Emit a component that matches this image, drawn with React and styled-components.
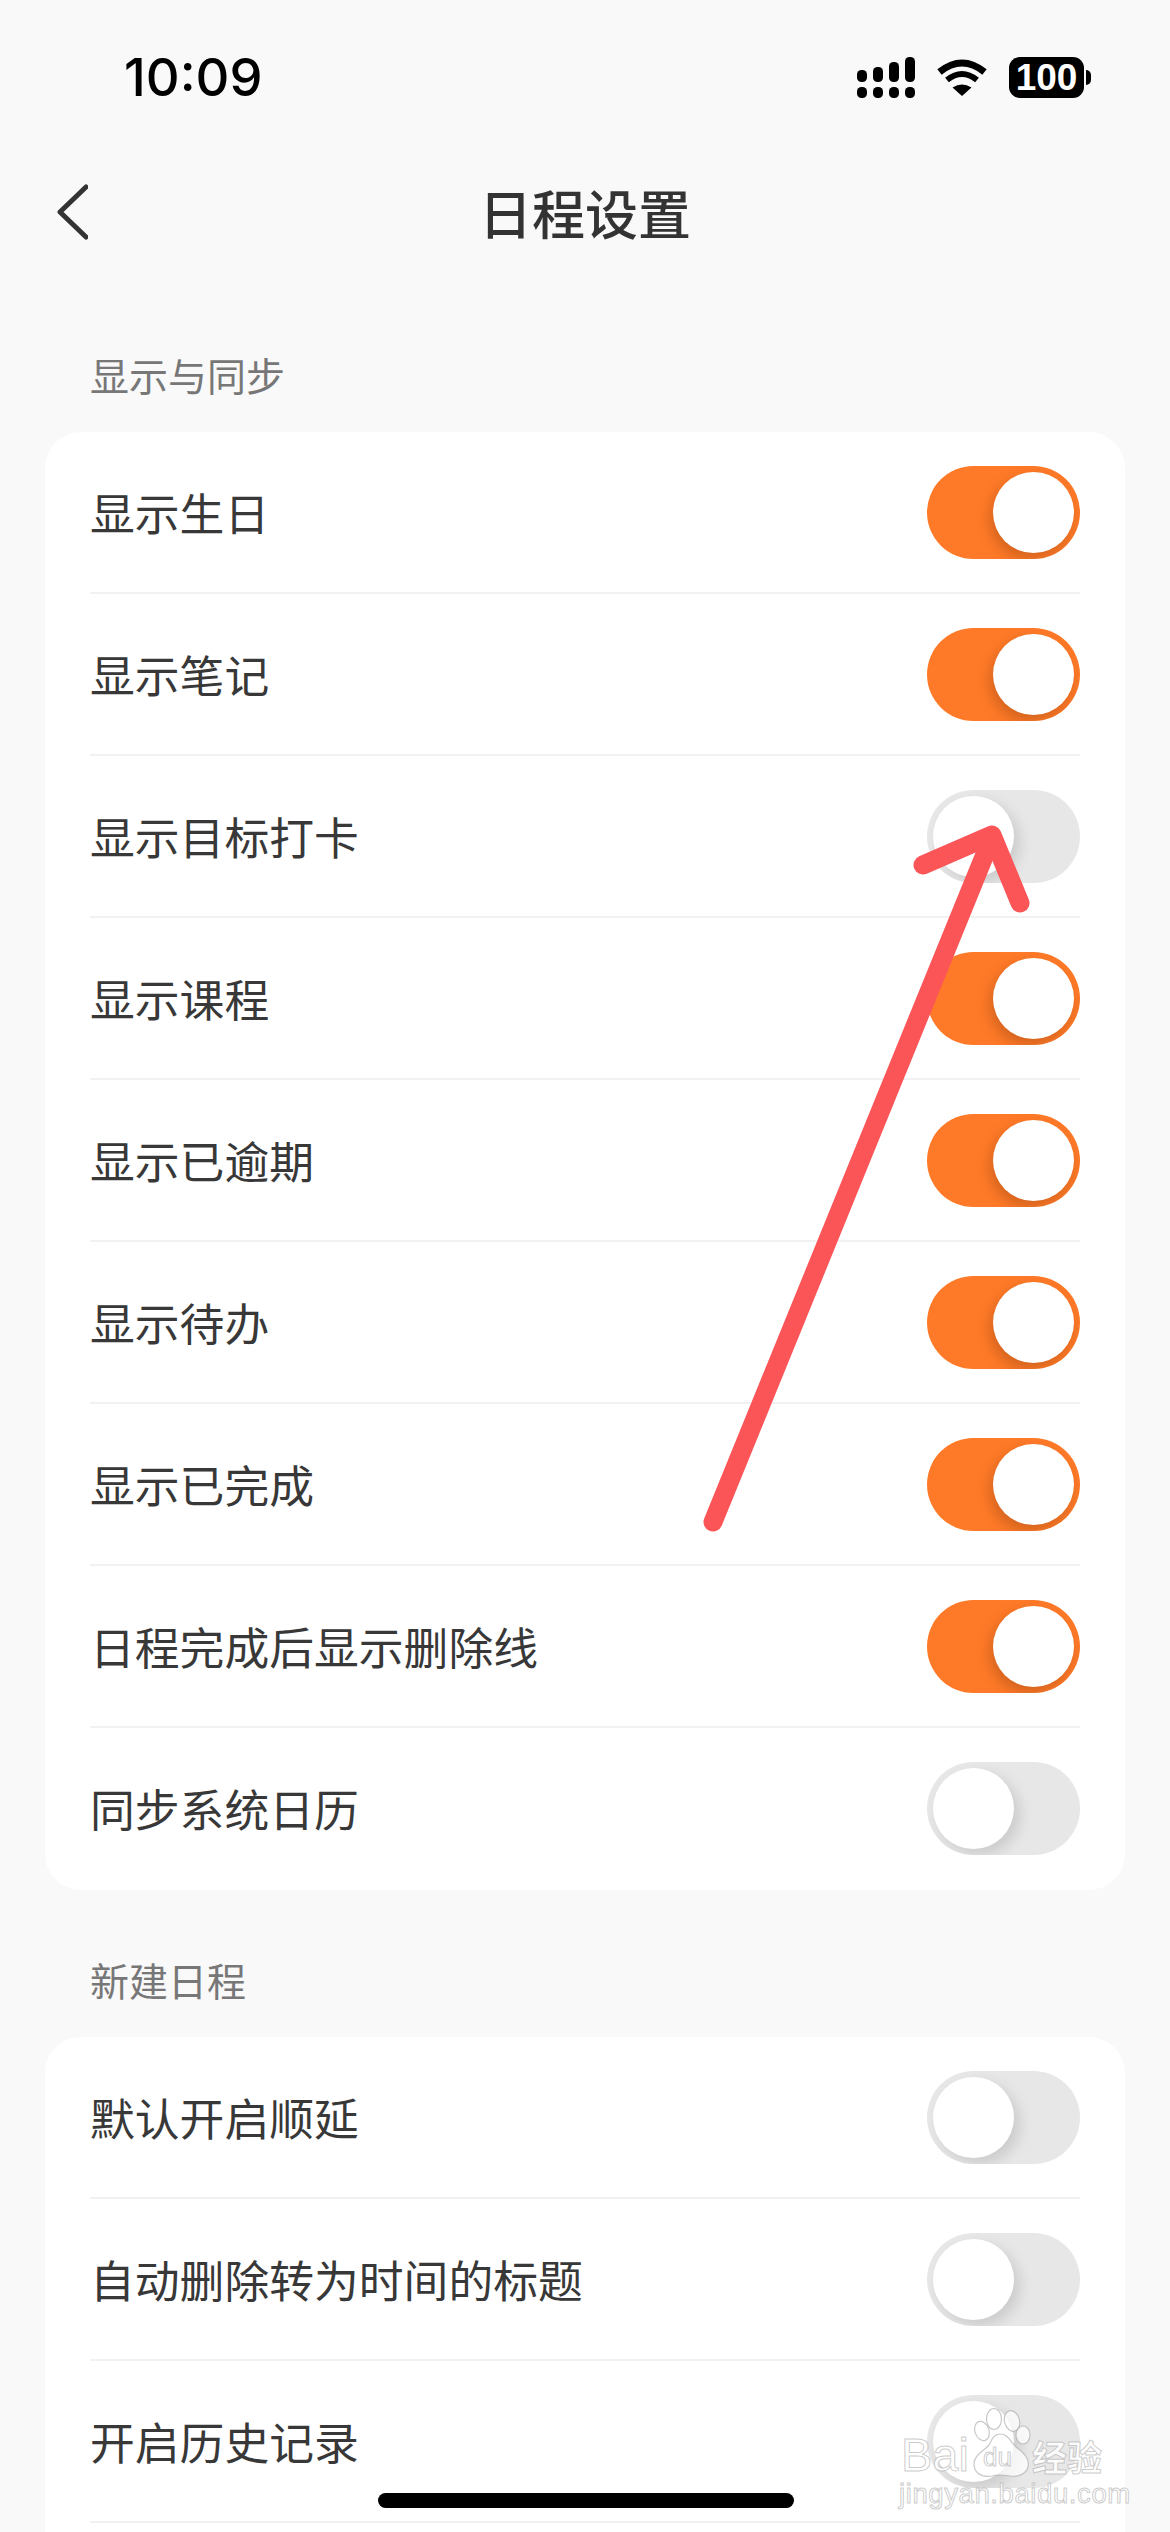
import React from "react";
import styled, { createGlobalStyle } from "styled-components";

const Global = createGlobalStyle`
  html, body { margin: 0; padding: 0; background: #f9f9f9; }
  * { box-sizing: border-box; }
`;

const CJK = `"Noto Sans CJK SC", "Noto Sans", sans-serif`;

const Page = styled.div`
  position: relative;
  width: 1170px;
  height: 2532px;
  overflow: hidden;
  background: #f9f9f9;
  font-family: ${CJK};
`;

const StatusBar = styled.header`
  height: 158px;
  padding: 57px 86px 0 124px;
  display: flex;
  align-items: flex-start;
  justify-content: space-between;
`;

const Clock = styled.div`
  font-family: Inter, "Liberation Sans", sans-serif;
  font-size: 52.5px;
  font-weight: 500;
  line-height: 41px;
  color: #000;
`;

const StatusIcons = styled.div`
  display: flex;
  align-items: flex-start;
  gap: 22px;
`;

const Battery = styled.div`
  position: relative;
  width: 75px;
  height: 41px;
  border-radius: 11px;
  background: #000;
  color: #fff;
  font-family: "Liberation Sans", sans-serif;
  font-weight: 700;
  font-size: 37px;
  line-height: 41px;
  text-align: center;
  &::after {
    content: "";
    position: absolute;
    left: 77px;
    top: 13px;
    width: 5px;
    height: 15px;
    border-radius: 0 8px 8px 0;
    background: #000;
  }
`;

const Nav = styled.nav`
  height: 108px;
  padding: 0 56px;
  display: grid;
  grid-template-columns: 1fr auto 1fr;
  align-items: center;
`;

const Title = styled.h1`
  margin: 0;
  font-size: 53px;
  font-weight: 500;
  line-height: 1;
  color: #333;
`;

const Sections = styled.main`
  padding: 54px 45px 0;
  display: flex;
  flex-direction: column;
  gap: 35px;
`;

const SectionTitle = styled.h2`
  margin: 0;
  height: 112px;
  padding: 0 0 5px 45px;
  display: flex;
  align-items: center;
  font-size: 39px;
  font-weight: 400;
  color: #777;
`;

const Card = styled.section`
  background: #fff;
  border-radius: 36px;
  padding: 0 45px;
`;

const Row = styled.div`
  height: 162px;
  padding-top: 1px;
  display: flex;
  align-items: center;
  justify-content: space-between;
  border-bottom: 2px solid #f1f1f1;
  &:last-child { border-bottom-color: transparent; }
`;

const Label = styled.span`
  font-size: 44.8px;
  line-height: 1;
  color: #383838;
`;

const Track = styled.div`
  width: 153px;
  height: 93px;
  padding: 6px;
  border-radius: 47px;
  overflow: hidden;
  display: flex;
  justify-content: ${(p) => (p.$on ? "flex-end" : "flex-start")};
  background: ${(p) => (p.$on ? "#ff7a28" : "#e7e7e7")};
`;

const Knob = styled.div`
  width: 81px;
  height: 81px;
  border-radius: 50%;
  background: #fff;
  box-shadow: ${(p) =>
    p.$on
      ? "-3px 6px 14px rgba(90, 40, 0, 0.28)"
      : "6px 6px 14px rgba(0, 0, 0, 0.12)"};
`;

const ArrowLayer = styled.svg`
  position: absolute;
  left: 0;
  top: 0;
  width: 1170px;
  height: 2532px;
  pointer-events: none;
`;

const HomeIndicator = styled.div`
  position: absolute;
  left: 378px;
  top: 2493px;
  width: 416px;
  height: 15px;
  border-radius: 8px;
  background: #000;
`;

const Watermark = styled.div`
  position: absolute;
  left: 899px;
  top: 2405px;
  width: 210px;
  display: flex;
  flex-direction: column;
  pointer-events: none;
`;

const MarkLine = styled.div`
  height: 72px;
  display: flex;
  align-items: flex-end;
`;

const Hollow = styled.span`
  font-family: "Liberation Sans", ${CJK};
  color: rgba(255, 255, 255, 0.85);
  -webkit-text-stroke: 1px rgba(170, 170, 170, 0.6);
`;

const Bai = styled(Hollow)`
  font-size: 47px;
  line-height: 44px;
  width: 73px;
  padding-left: 2px;
  flex: none;
`;

const Jing = styled(Hollow)`
  font-size: 35px;
  line-height: 42px;
  font-weight: 700;
  font-family: ${CJK};
  white-space: nowrap;
`;

const Paw = styled.div`
  position: relative;
  width: 60px;
  height: 70px;
  flex: none;
`;

const Du = styled(Hollow)`
  position: absolute;
  left: 11px;
  top: 37px;
  font-size: 26px;
  line-height: 26px;
`;

const Domain = styled(Hollow)`
  margin-top: 3px;
  font-size: 27.5px;
  line-height: 28px;
  letter-spacing: 0.6px;
  white-space: nowrap;
`;

function Switch({ on }) {
  return (
    <Track $on={on}>
      <Knob $on={on} />
    </Track>
  );
}

const sections = [
  {
    title: "显示与同步",
    rows: [
      ["显示生日", true],
      ["显示笔记", true],
      ["显示目标打卡", false],
      ["显示课程", true],
      ["显示已逾期", true],
      ["显示待办", true],
      ["显示已完成", true],
      ["日程完成后显示删除线", true],
      ["同步系统日历", false],
    ],
  },
  {
    title: "新建日程",
    rows: [
      ["默认开启顺延", false],
      ["自动删除转为时间的标题", false],
      ["开启历史记录", false],
      ["", false],
    ],
  },
];

export default function App() {
  return (
    <Page>
      <Global />
      <StatusBar>
        <Clock>10:09</Clock>
        <StatusIcons>
          <svg width="58" height="41" viewBox="0 0 58 41" fill="#000">
            <rect x="0" y="13" width="10" height="12" rx="4.5" />
            <rect x="16" y="10" width="10" height="15" rx="4.5" />
            <rect x="32" y="5" width="10" height="20" rx="4.5" />
            <rect x="48" y="0" width="10" height="25" rx="4.5" />
            <rect x="0" y="30" width="10" height="11" rx="4.5" />
            <rect x="16" y="30" width="10" height="11" rx="4.5" />
            <rect x="32" y="30" width="10" height="11" rx="4.5" />
            <rect x="48" y="30" width="10" height="11" rx="4.5" />
          </svg>
          <svg width="50" height="39" viewBox="0 -2 50 39" fill="none" stroke="#000">
            <path d="M2.5 13 Q25 -5 47.5 13" strokeWidth="7" />
            <path d="M10 21 Q25 9 40 21" strokeWidth="6" />
            <path d="M15.5 28.5 Q25 22.5 34.5 28.5 L25 37 Z" fill="#000" stroke="none" />
          </svg>
          <Battery>100</Battery>
        </StatusIcons>
      </StatusBar>

      <Nav>
        <svg width="32" height="56" viewBox="0 0 32 56" fill="none" stroke="#333" strokeWidth="5" strokeLinecap="round" strokeLinejoin="round">
          <path d="M30 3 L4 28 L30 53" />
        </svg>
        <Title>日程设置</Title>
      </Nav>

      <Sections>
        {sections.map((s) => (
          <div key={s.title}>
            <SectionTitle>{s.title}</SectionTitle>
            <Card>
              {s.rows.map(([label, on], i) => (
                <Row key={i}>
                  <Label>{label}</Label>
                  <Switch on={on} />
                </Row>
              ))}
            </Card>
          </div>
        ))}
      </Sections>

      <ArrowLayer viewBox="0 0 1170 2532" fill="none" stroke="#fb5558" strokeLinecap="round" strokeLinejoin="round">
        <path d="M713 1522 L990 842" strokeWidth="19" />
        <path d="M923 865 L992 835 L1020 903" strokeWidth="19" />
      </ArrowLayer>

      <Watermark>
        <MarkLine>
          <Bai>Bai</Bai>
          <Paw>
            <svg width="60" height="70" viewBox="0 0 60 70" fill="rgba(255,255,255,0.75)" stroke="rgba(170,170,170,0.65)" strokeWidth="1.2">
              <ellipse cx="10" cy="24" rx="7" ry="10" transform="rotate(-20 10 24)" />
              <ellipse cx="22" cy="12" rx="7.5" ry="10.5" />
              <ellipse cx="40" cy="14" rx="7.5" ry="10.5" transform="rotate(-15 40 14)" />
              <ellipse cx="51" cy="28" rx="7" ry="9" />
              <path d="M28 27 C36 27 38 34 44 40 C52 46 58 52 56 60 C54 68 44 70 38 69 C32 68 26 67 20 69 C10 71 2 66 2 57 C2 48 12 44 17 38 C20 32 22 27 28 27 Z" />
            </svg>
            <Du>du</Du>
          </Paw>
          <Jing>经验</Jing>
        </MarkLine>
        <Domain>jingyan.baidu.com</Domain>
      </Watermark>

      <HomeIndicator />
    </Page>
  );
}
